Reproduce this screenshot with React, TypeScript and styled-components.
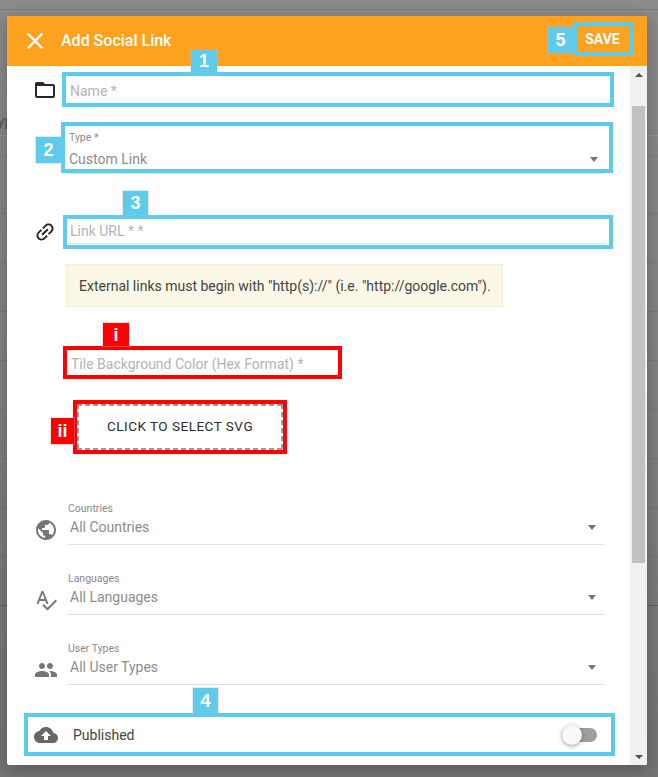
import React from "react";
import styled, { createGlobalStyle } from "styled-components";

const Global = createGlobalStyle`
  html, body { margin: 0; padding: 0; background: #808080; }
  * { box-sizing: border-box; }
  body { font-family: Roboto, "Liberation Sans", sans-serif; }
`;

const Page = styled.div`
  position: relative;
  width: 658px;
  height: 777px;
  overflow: hidden;
  background: linear-gradient(180deg, #8b8b8b 0%, #858585 40%, #747474 100%);
`;

const BackdropRow = styled.div<{ $h: number; $line: string }>`
  height: ${(p) => p.$h}px;
  border-bottom: 1px solid ${(p) => p.$line};
  display: flex;
  align-items: flex-end;
  padding-bottom: 6px;
  overflow: hidden;
`;

const BackdropText = styled.span`
  margin-left: -10px;
  font-size: 14px;
  line-height: 16px;
  color: #5c5148;
`;

const Dialog = styled.div`
  position: absolute;
  left: 7px;
  top: 16px;
  width: 640px;
  height: 749px;
  display: flex;
  flex-direction: column;
  background: #fff;
  border-radius: 2px;
  overflow: hidden;
  box-shadow: 0 4px 18px rgba(0, 0, 0, 0.28);
`;

const Header = styled.header`
  flex: none;
  height: 50px;
  display: flex;
  align-items: center;
  padding-left: 14px;
  padding-right: 13px;
  background: #fca21e;
  color: #fff;
`;

const Title = styled.h1`
  margin: 0 0 0 12px;
  flex: 1;
  font-size: 16px;
  font-weight: 500;
  line-height: 20px;
`;

const Body = styled.div`
  flex: 1;
  min-height: 0;
  display: flex;
`;

const Form = styled.div`
  flex: 1;
  min-width: 0;
  display: flex;
  flex-direction: column;
`;

const Scrollbar = styled.div`
  flex: none;
  width: 17px;
  display: flex;
  flex-direction: column;
  align-items: center;
  background: #f1f1f1;
`;

const Arrow = styled.span<{ $down?: boolean }>`
  flex: none;
  width: 0;
  height: 0;
  margin-top: ${(p) => (p.$down ? "auto" : "7px")};
  margin-bottom: ${(p) => (p.$down ? "6px" : "0")};
  border-left: 4px solid transparent;
  border-right: 4px solid transparent;
  ${(p) => (p.$down ? "border-top: 4px solid #505050;" : "border-bottom: 4px solid #505050;")}
`;

const Thumb = styled.div`
  flex: none;
  width: 13px;
  height: 457px;
  margin-top: 29px;
  background: #c1c1c1;
`;

const Row = styled.div<{ $top: number }>`
  flex: none;
  display: flex;
  align-items: center;
  margin-top: ${(p) => p.$top}px;
`;

const IconSlot = styled.div<{ $w: number; $left?: number; $nudge?: number; $color?: string }>`
  flex: none;
  width: ${(p) => p.$w}px;
  padding-left: ${(p) => p.$left ?? 26}px;
  margin-top: ${(p) => p.$nudge ?? 0}px;
  display: flex;
  color: ${(p) => p.$color ?? "#757575"};
`;

const Highlight = styled.div<{ $w: number; $h: number; $left?: number; $bottom?: number; $color?: string }>`
  position: relative;
  flex: none;
  width: ${(p) => p.$w}px;
  height: ${(p) => p.$h}px;
  margin-left: ${(p) => p.$left ?? 0}px;
  margin-bottom: ${(p) => p.$bottom ?? 0}px;
  border: 4px solid ${(p) => p.$color ?? "#5ecbea"};
`;

const Callout = styled.span<{ $x: number; $y: number; $w: number; $h: number; $color?: string }>`
  position: absolute;
  left: ${(p) => p.$x}px;
  top: ${(p) => p.$y}px;
  width: ${(p) => p.$w}px;
  height: ${(p) => p.$h}px;
  display: flex;
  align-items: center;
  justify-content: center;
  background: ${(p) => p.$color ?? "#5ecbea"};
  color: #fff;
  font-family: "Liberation Sans", Arial, sans-serif;
  font-size: 18px;
  font-weight: 700;
  line-height: 1;
  box-shadow: 0 0 0 1px rgba(190, 190, 190, 0.35);
  z-index: 2;
`;

const Placeholder = styled.div`
  height: 100%;
  display: flex;
  align-items: center;
  padding: 2px 0 0 4px;
  font-size: 14px;
  color: #b4b4b4;
  white-space: nowrap;
`;

const UnderlinedInput = styled.div`
  height: 25px;
  margin-left: 1px;
  margin-right: 3px;
  border-bottom: 1px solid #e0e0e0;
  display: flex;
  align-items: center;
  padding: 0 0 1px 2px;
  font-size: 14px;
  color: #b4b4b4;
`;

const TypeField = styled.div`
  position: relative;
  height: 100%;
  padding: 6px 0 0 4px;
`;

const TypeUnderline = styled.span`
  position: absolute;
  left: 2px;
  right: 3px;
  bottom: -5px;
  height: 1px;
  background: #e0e0e0;
`;

const SmallLabel = styled.div`
  font-size: 10.5px;
  line-height: 12px;
  color: #8a8a8a;
  white-space: nowrap;
`;

const SelectValue = styled.div`
  display: flex;
  align-items: center;
  justify-content: space-between;
  font-size: 14px;
  line-height: 18px;
  color: #8c8c8c;
`;

const Caret = styled.span`
  flex: none;
  width: 0;
  height: 0;
  border-left: 4.5px solid transparent;
  border-right: 4.5px solid transparent;
  border-top: 5px solid #757575;
`;

const TypeValue = styled(SelectValue)`
  margin-top: 6px;
  padding-right: 11px;
`;

const Notice = styled.div`
  flex: none;
  width: 437px;
  height: 43px;
  margin: 15px 0 0 59px;
  display: flex;
  align-items: center;
  padding-left: 12px;
  background: #fcf8e8;
  border: 1px solid #f6eed2;
  font-size: 14px;
  color: #444;
  white-space: nowrap;
`;

const dash = "#9a9a9a 0 5px, transparent 5px 8px";

const DropZone = styled.div`
  height: 100%;
  display: flex;
  align-items: center;
  justify-content: center;
  padding-bottom: 2px;
  background-image:
    repeating-linear-gradient(90deg, ${dash}),
    repeating-linear-gradient(90deg, ${dash}),
    repeating-linear-gradient(180deg, ${dash}),
    repeating-linear-gradient(180deg, ${dash});
  background-size: 100% 2px, 100% 2px, 2px 100%, 2px 100%;
  background-position: 0 0, 0 100%, 0 0, 100% 0;
  background-repeat: no-repeat;
  font-size: 13.5px;
  font-weight: 400;
  letter-spacing: 0.5px;
  color: #2a2a2a;
  white-space: nowrap;
`;

const SelectField = styled.div`
  flex: none;
  width: 536px;
  height: 44px;
  padding-top: 2px;
  border-bottom: 1px solid #e0e0e0;
`;

const SelectInner = styled(SelectValue)`
  margin-top: 3px;
  padding: 0 8px 0 2px;
`;

const PublishRow = styled.div`
  height: 100%;
  display: flex;
  align-items: center;
  padding: 0 14px 0 6px;
  color: #666;
`;

const PublishLabel = styled.span`
  flex: 1;
  margin-left: 15px;
  font-size: 14px;
  color: #444;
`;

const Toggle = styled.span`
  position: relative;
  flex: none;
  width: 35px;
  height: 14px;
  border-radius: 7px;
  background: #9e9e9e;
`;

const ToggleThumb = styled.span`
  position: absolute;
  left: 0;
  top: -3px;
  width: 20px;
  height: 20px;
  border-radius: 50%;
  background: #fafafa;
  box-shadow: 0 1px 4px rgba(0, 0, 0, 0.4);
`;

const SaveLabel = styled.span`
  height: 100%;
  display: flex;
  align-items: center;
  justify-content: center;
  padding-right: 2px;
  font-size: 14px;
  font-weight: 700;
  color: #fff;
`;

const IconSvg = styled.svg<{ $rotate?: number }>`
  flex: none;
  fill: currentColor;
  transform: rotate(${(p) => p.$rotate ?? 0}deg);
`;

const Icon = ({ d, size = 24, rotate }: { d: string; size?: number; rotate?: number }) => (
  <IconSvg width={size} height={size} viewBox="0 0 24 24" $rotate={rotate}>
    <path d={d} />
  </IconSvg>
);

const P = {
  close: "M19 6.41L17.59 5 12 10.59 6.41 5 5 6.41 10.59 12 5 17.59 6.41 19 12 13.41 17.59 19 19 17.59 13.41 12z",
  folder: "M20 6h-8l-2-2H4c-1.1 0-1.99.9-1.99 2L2 18c0 1.1.9 2 2 2h16c1.1 0 2-.9 2-2V8c0-1.1-.9-2-2-2zm0 12H4V8h16v10z",
  link: "M3.9 12c0-1.71 1.39-3.1 3.1-3.1h4V7H7c-2.76 0-5 2.24-5 5s2.24 5 5 5h4v-1.9H7c-1.71 0-3.1-1.39-3.1-3.1zM8 13h8v-2H8v2zm9-6h-4v1.9h4c1.71 0 3.1 1.39 3.1 3.1s-1.39 3.1-3.1 3.1h-4V17h4c2.76 0 5-2.24 5-5s-2.24-5-5-5z",
  globe: "M12 2C6.48 2 2 6.48 2 12s4.48 10 10 10 10-4.48 10-10S17.52 2 12 2zm-1 17.93c-3.95-.49-7-3.85-7-7.93 0-.62.08-1.21.21-1.79L9 15v1c0 1.1.9 2 2 2v1.93zm6.9-2.54c-.26-.81-1-1.39-1.9-1.39h-1v-3c0-.55-.45-1-1-1H8v-2h2c.55 0 1-.45 1-1V7h2c1.1 0 2-.9 2-2v-.41c2.93 1.19 5 4.06 5 7.41 0 2.08-.8 3.97-2.1 5.39z",
  spell: "M12.45 16h2.09L9.43 3H7.57L2.46 16h2.09l1.12-3h5.64l1.14 3zm-6.02-5L8.5 5.48 10.57 11H6.43zm15.16.59l-8.09 8.09L9.83 16l-1.41 1.41 5.09 5.09L23 13l-1.41-1.41z",
  people: "M16 11c1.66 0 2.99-1.34 2.99-3S17.66 5 16 5c-1.66 0-3 1.34-3 3s1.34 3 3 3zm-8 0c1.66 0 2.99-1.34 2.99-3S9.66 5 8 5C6.34 5 5 6.34 5 8s1.34 3 3 3zm0 2c-2.33 0-7 1.17-7 3.5V19h14v-2.5c0-2.33-4.67-3.5-7-3.5zm8 0c-.29 0-.62.02-.97.05 1.16.84 1.97 1.97 1.97 3.45V19h6v-2.5c0-2.33-4.67-3.5-7-3.5z",
  cloud: "M19.35 10.04C18.67 6.59 15.64 4 12 4 9.11 4 6.6 5.64 5.35 8.04 2.34 8.36 0 10.91 0 14c0 3.31 2.69 6 6 6h13c2.76 0 5-2.24 5-5 0-2.64-2.05-4.78-4.65-4.96zM14 13v4h-4v-4H7l5-5 5 5h-3z",
};

const backdropRows = [
  { h: 10, line: "#7b7b7b" },
  { h: 126, line: "#949494", text: "Type" },
  { h: 21, line: "#7e7e7e" },
  { h: 57, line: "#7c7c7c" },
  { h: 49, line: "#7c7c7c" },
  { h: 49, line: "#7a7a7a" },
  { h: 49, line: "#7a7a7a" },
  { h: 49, line: "#787878" },
  { h: 49, line: "#777777" },
  { h: 49, line: "#767676" },
  { h: 49, line: "#737373" },
  { h: 49, line: "#5f5f5f" },
];

const selects = [
  { label: "Countries", value: "All Countries", icon: P.globe, top: 47 },
  { label: "Languages", value: "All Languages", icon: P.spell, top: 26 },
  { label: "User Types", value: "All User Types", icon: P.people, top: 26 },
];

export default function App() {
  return (
    <Page>
      <Global />
      {backdropRows.map((r, i) => (
        <BackdropRow key={i} $h={r.h} $line={r.line}>
          {r.text && <BackdropText>{r.text}</BackdropText>}
        </BackdropRow>
      ))}
      <Dialog>
        <Header>
          <Icon d={P.close} size={28} />
          <Title>Add Social Link</Title>
          <Highlight $w={61} $h={34} $bottom={4}>
            <Callout $x={-29} $y={1} $w={25} $h={26}>5</Callout>
            <SaveLabel>SAVE</SaveLabel>
          </Highlight>
        </Header>
        <Body>
          <Form>
            <Row $top={6}>
              <IconSlot $w={55} $color="#262626">
                <Icon d={P.folder} />
              </IconSlot>
              <Highlight $w={552} $h={35}>
                <Callout $x={125} $y={-26} $w={26} $h={22}>1</Callout>
                <Placeholder>Name *</Placeholder>
              </Highlight>
            </Row>
            <Row $top={15}>
              <Highlight $w={552} $h={51} $left={54}>
                <Callout $x={-29} $y={11} $w={25} $h={26}>2</Callout>
                <TypeField>
                  <SmallLabel>Type *</SmallLabel>
                  <TypeValue>
                    Custom Link
                    <Caret />
                  </TypeValue>
                  <TypeUnderline />
                </TypeField>
              </Highlight>
            </Row>
            <Row $top={42}>
              <IconSlot $w={56} $color="#262626">
                <Icon d={P.link} size={24} rotate={-45} />
              </IconSlot>
              <Highlight $w={550} $h={34}>
                <Callout $x={56} $y={-28} $w={25} $h={24}>3</Callout>
                <UnderlinedInput>Link URL * *</UnderlinedInput>
              </Highlight>
            </Row>
            <Notice>External links must begin with "http(s)://" (i.e. "http://google.com").</Notice>
            <Row $top={39}>
              <Highlight $w={279} $h={33} $left={56} $color="#ff0000">
                <Callout $x={36} $y={-27} $w={26} $h={23} $color="#ff0000">i</Callout>
                <Placeholder>Tile Background Color (Hex Format) *</Placeholder>
              </Highlight>
            </Row>
            <Row $top={21}>
              <Highlight $w={214} $h={54} $left={66} $color="#ff0000">
                <Callout $x={-26} $y={14} $w={23} $h={26} $color="#ff0000">ii</Callout>
                <DropZone>CLICK TO SELECT SVG</DropZone>
              </Highlight>
            </Row>
            {selects.map((s) => (
              <Row $top={s.top} key={s.label}>
                <IconSlot $w={61} $nudge={13} $left={27}>
                  <Icon d={s.icon} />
                </IconSlot>
                <SelectField>
                  <SmallLabel>{s.label}</SmallLabel>
                  <SelectInner>
                    {s.value}
                    <Caret />
                  </SelectInner>
                </SelectField>
              </Row>
            ))}
            <Row $top={28}>
              <Highlight $w={591} $h={43} $left={17}>
                <Callout $x={165} $y={-29} $w={25} $h={25}>4</Callout>
                <PublishRow>
                  <Icon d={P.cloud} />
                  <PublishLabel>Published</PublishLabel>
                  <Toggle>
                    <ToggleThumb />
                  </Toggle>
                </PublishRow>
              </Highlight>
            </Row>
          </Form>
          <Scrollbar>
            <Arrow />
            <Thumb />
            <Arrow $down />
          </Scrollbar>
        </Body>
      </Dialog>
    </Page>
  );
}
